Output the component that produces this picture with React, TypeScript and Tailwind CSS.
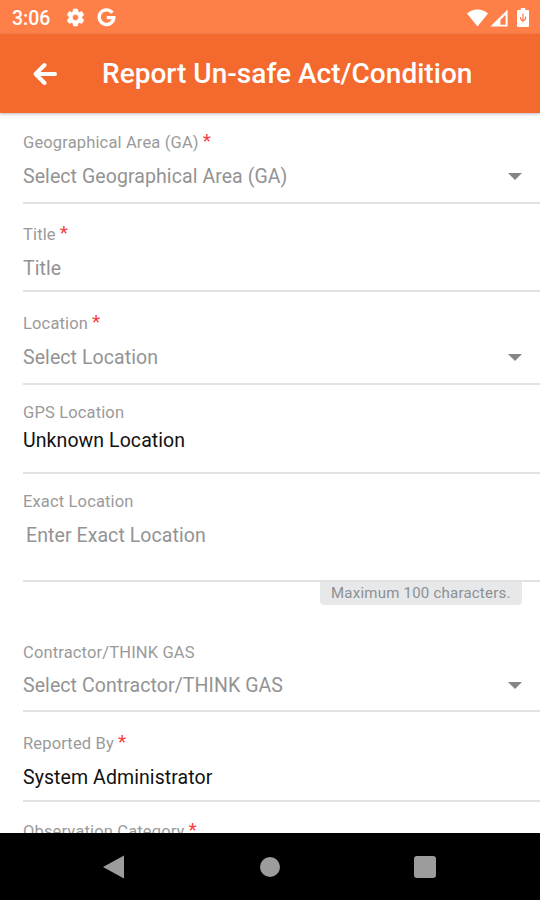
import clsx from 'clsx';

interface Field {
  label: string;
  value?: string;
  required?: boolean;
  dropdown?: boolean;
  filled?: boolean;
  hint?: string;
  // row height and inner spacing
  box: string;
  valueGap?: string;
}

const FIELDS: Field[] = [
  { label: 'Geographical Area (GA)', value: 'Select Geographical Area (GA)', required: true, dropdown: true, box: 'h-[91px] pt-5', valueGap: 'mt-3' },
  { label: 'Title', value: 'Title', required: true, box: 'h-[88px] pt-[21px]', valueGap: 'mt-3' },
  { label: 'Location', value: 'Select Location', required: true, dropdown: true, box: 'h-[93px] pt-[22px]', valueGap: 'mt-3' },
  { label: 'GPS Location', value: 'Unknown Location', filled: true, box: 'h-[89px] pt-[18px]', valueGap: 'mt-1.5' },
  { label: 'Exact Location', value: 'Enter Exact Location', hint: 'Maximum 100 characters.', box: 'h-[108px] pt-[18px]', valueGap: 'mt-3 pl-[3px]' },
  { label: 'Contractor/THINK GAS', value: 'Select Contractor/THINK GAS', dropdown: true, box: 'h-[107px] pt-[38px]', valueGap: 'mt-[11px]' },
  { label: 'Reported By', value: 'System Administrator', required: true, filled: true, box: 'h-[90px] pt-[22px]', valueGap: 'mt-3' },
  { label: 'Observation Category', required: true, box: 'h-[89px] pt-5' },
];

function StatusBar() {
  return (
    <div className="flex h-[34px] shrink-0 items-center bg-[#ff7f49] pt-px pl-3 text-white">
      <span className="w-[53px] pt-0.5 text-[19.5px] leading-5 font-medium">3:06</span>
      <svg className="size-[21px]" viewBox="0 0 24 24" fill="currentColor" stroke="currentColor" strokeWidth="0.9">
        <path d="M19.14 12.94c.04-.3.06-.61.06-.94s-.02-.64-.07-.94l2.03-1.58a.49.49 0 0 0 .12-.61l-1.92-3.32a.49.49 0 0 0-.59-.22l-2.39.96a7 7 0 0 0-1.62-.94l-.36-2.54a.48.48 0 0 0-.48-.41h-3.84a.48.48 0 0 0-.47.41l-.36 2.54c-.59.24-1.13.57-1.62.94l-2.39-.96a.48.48 0 0 0-.59.22L2.74 8.87a.48.48 0 0 0 .12.61l2.03 1.58a6 6 0 0 0 0 1.88l-2.03 1.58a.49.49 0 0 0-.12.61l1.92 3.32c.12.22.37.29.59.22l2.39-.96c.5.38 1.03.7 1.62.94l.36 2.54c.05.24.24.41.48.41h3.84c.24 0 .44-.17.47-.41l.36-2.54a7 7 0 0 0 1.62-.94l2.39.96c.22.08.47 0 .59-.22l1.92-3.32a.48.48 0 0 0-.12-.61zM12 15.6A3.6 3.6 0 1 1 12 8.4a3.6 3.6 0 0 1 0 7.2" />
      </svg>
      <svg className="ml-[11px] size-[19px]" viewBox="0 0 19 19" fill="none" stroke="currentColor" strokeWidth="3.4">
        <path d="M15.3 4.7A7.3 7.3 0 1 0 16.8 9.6H9.8" />
      </svg>
      <svg className="ml-auto h-[18px] w-[21px]" viewBox="0 0 21 18" fill="currentColor">
        <path d="M0 4.6C6 -.8 15 -.8 21 4.6L10.5 17.5Z" />
      </svg>
      <svg className="ml-0.5 size-[18px]" viewBox="0 0 18 18" fill="currentColor">
        <path fillRule="evenodd" d="M17.6.4V17.6H.4ZM15.6 5.8 10.4 11V15.8H15.6Z" />
      </svg>
      <svg className="mr-[11px] ml-[9px] h-[19px] w-3" viewBox="0 0 12 19">
        <path fill="currentColor" d="M3.8 0h4.4v2H11a1 1 0 0 1 1 1v15a1 1 0 0 1-1 1H1a1 1 0 0 1-1-1V3a1 1 0 0 1 1-1h2.8z" />
        <path d="M6 5.5V14M3.5 9v2L6 13.3 8.5 11V8.5" fill="none" stroke="#ff7f49" strokeWidth="1.2" />
      </svg>
    </div>
  );
}

function AppHeader() {
  return (
    <header className="relative z-10 flex h-[79px] shrink-0 items-center bg-[#f4692e] pl-[33px] text-white shadow-[0_1px_3px_rgba(60,50,70,0.35)]">
      <svg className="h-6 w-6" viewBox="0 0 24 24" fill="none" stroke="currentColor" strokeWidth="4" strokeLinecap="round" strokeLinejoin="round">
        <path d="M22 12H3M11.5 3 2.6 12l8.9 9" />
      </svg>
      <h1 className="ml-[45px] text-[28px] leading-8 font-medium tracking-[0.03px] whitespace-nowrap">Report Un-safe Act/Condition</h1>
    </header>
  );
}

function FieldRow({ field }: { field: Field }) {
  return (
    <>
      <div className={clsx('ml-[23px] border-b-2 border-[#e2e2e2]', field.box)}>
        <div className="flex h-5 text-[16.5px] leading-5 tracking-[0.15px] whitespace-nowrap text-[#9a9a9a]">
          {field.label}
          {field.required && <span className="-mt-0.5 ml-1 text-[19px] text-[#fb3b42]">*</span>}
        </div>
        {field.value && (
          <div
            className={clsx(
              'flex items-center text-[19.5px] leading-6 tracking-[0.08px] whitespace-nowrap',
              field.filled ? 'text-[#111]' : 'text-[#939393]',
              field.valueGap,
            )}
          >
            {field.value}
            {field.dropdown && (
              <svg className="mr-[18px] mb-px ml-auto h-[7px] w-[14px]" viewBox="0 0 14 7" fill="#858585">
                <path d="M0 0H14L7 7Z" />
              </svg>
            )}
          </div>
        )}
      </div>
      {field.hint && (
        <div className="mr-[18px] ml-auto h-[23px] w-[202px] rounded-b bg-[#e7e8e9] pl-[11px] text-[15px] leading-[22px] tracking-[0.23px] whitespace-nowrap text-[#8b9094]">
          {field.hint}
        </div>
      )}
    </>
  );
}

function NavBar() {
  return (
    <nav className="flex h-[67px] shrink-0 items-center bg-black">
      <svg className="ml-[103px] h-6 w-[21px]" viewBox="0 0 21 24" fill="#9c9c9c">
        <path d="M21 .5V23.5L0 12Z" />
      </svg>
      <div className="ml-[136px] size-5 rounded-full bg-[#9c9c9c]" />
      <div className="ml-[134px] size-[22px] rounded-[3px] bg-[#9c9c9c]" />
    </nav>
  );
}

export default function App() {
  return (
    <div className="flex h-[900px] w-[540px] flex-col overflow-hidden bg-white font-[Roboto,sans-serif]">
      <StatusBar />
      <AppHeader />
      <main className="min-h-0 flex-1 overflow-hidden">
        {FIELDS.map((field) => (
          <FieldRow key={field.label} field={field} />
        ))}
      </main>
      <NavBar />
    </div>
  );
}
